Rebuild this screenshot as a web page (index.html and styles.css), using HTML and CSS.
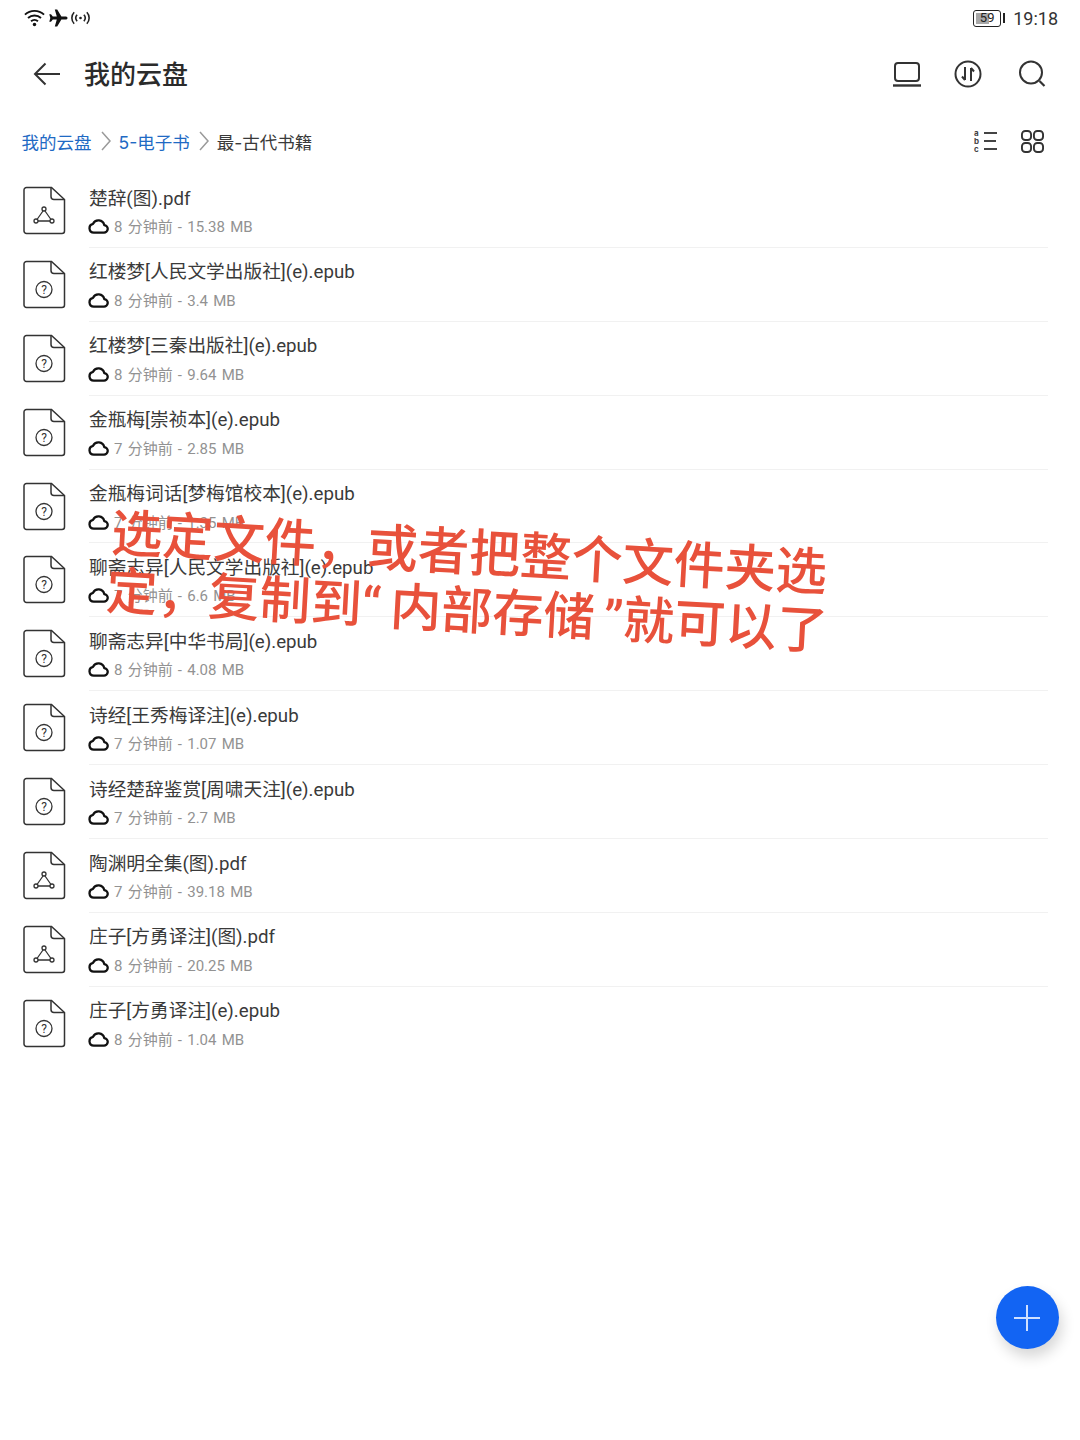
FILE: index.html
```html
<!DOCTYPE html>
<html lang="zh">
<head>
<meta charset="utf-8">
<title>我的云盘</title>
<link rel="stylesheet" href="styles.css">
</head>
<body>
<svg class="defs" width="0" height="0">
  <symbol id="file-base" viewBox="0 0 44 50">
    <path d="M3.5 1.5H28.500L41.500 13.500V45a2.500 2.500 0 0 1-2.500 2.500H3.500A2.500 2.500 0 0 1 1 45V4a2.500 2.500 0 0 1 2.500-2.500Z" fill="none" stroke="#333" stroke-width="1.500"/>
    <path d="M28 2V10.500a3 3 0 0 0 3 3H41" fill="none" stroke="#333" stroke-width="1.500"/>
  </symbol>
  <symbol id="cloud" viewBox="0 0 22 17">
    <path d="M6 15.500h10.500a4 4 0 0 0 .6-8A6.300 6.300 0 0 0 5.200 6.200 4.700 4.700 0 0 0 6 15.500Z" fill="none" stroke="#111" stroke-width="2.400" stroke-linejoin="round"/>
  </symbol>
</svg>

<header class="status">
  <div class="status-left">
    <svg class="i-wifi" viewBox="0 0 22 18"><path d="M1 5.500a14.500 14.500 0 0 1 20 0M4.200 9a10 10 0 0 1 13.600 0M7.400 12.400a5.400 5.400 0 0 1 7.200 0" fill="none" stroke="#111" stroke-width="2"/><circle cx="11" cy="15.800" r="1.800" fill="#111"/></svg>
    <svg class="i-plane" viewBox="0 0 20 18"><path d="M19.500 9c0-1-1-1.500-2-1.500h-4.100L9.200.5H6.800l2 7H4.800L3 5.200H1.300L2.300 9l-1 3.800H3l1.800-2.300h4l-2 7h2.400l4.200-7h4.100c1 0 2-.5 2-1.500Z" fill="#111"/></svg>
    <svg class="i-hot" viewBox="1 .5 18 13"><path d="M4 1.500a8 8 0 0 0 0 11M16 1.500a8 8 0 0 1 0 11M6.800 4a4.500 4.500 0 0 0 0 6M13.200 4a4.500 4.500 0 0 1 0 6" fill="none" stroke="#222" stroke-width="1.500"/><circle cx="10" cy="7" r="1.300" fill="#222"/></svg>
  </div>
  <div class="status-right">
    <div class="battery"><div class="battery-fill"></div><span class="battery-num">59</span></div>
    <div class="battery-cap"></div>
    <span class="clock">19:18</span>
  </div>
</header>

<nav class="appbar">
  <svg class="i-back" viewBox="0 0 28 24"><path d="M27 12H2M12.500 1.500 2 12l10.500 10.500" fill="none" stroke="#333" stroke-width="2"/></svg>
  <h1 class="title">我的云盘</h1>
  <div class="actions">
    <svg class="i-action" viewBox="0 0 30 26"><rect x="3" y="2" width="24" height="18" rx="3" fill="none" stroke="#333" stroke-width="2"/><path d="M1 24.500h28" stroke="#333" stroke-width="2.400"/></svg>
    <svg class="i-action mid" viewBox="0 0 28 28"><circle cx="14" cy="14" r="12.500" fill="none" stroke="#333" stroke-width="2"/><path d="M11 7v13M8 16.500l3 3.500M17 21V8M17 8l3 3.500" fill="none" stroke="#333" stroke-width="2"/></svg>
    <svg class="i-action" viewBox="0 0 28 28"><circle cx="13" cy="12.500" r="11" fill="none" stroke="#333" stroke-width="2"/><path d="m21.500 21 5 5" stroke="#333" stroke-width="2.200"/></svg>
  </div>
</nav>

<section class="crumbs">
  <a class="crumb">我的云盘</a>
  <svg class="chev" viewBox="0 0 10 20"><path d="m1 1 8 9-8 9" fill="none" stroke="#9a9a9a" stroke-width="1.500"/></svg>
  <a class="crumb">5-电子书</a>
  <svg class="chev" viewBox="0 0 10 20"><path d="m1 1 8 9-8 9" fill="none" stroke="#9a9a9a" stroke-width="1.500"/></svg>
  <span class="crumb-now">最-古代书籍</span>
  <div class="view-toggle">
    <div class="i-list">
      <div class="list-row"><span class="list-letter">a</span><span class="list-bar"></span></div>
      <div class="list-row"><span class="list-letter">b</span><span class="list-bar short"></span></div>
      <div class="list-row"><span class="list-letter">c</span><span class="list-bar"></span></div>
    </div>
    <svg class="i-grid" viewBox="0 0 24 24"><g fill="none" stroke="#333" stroke-width="2"><rect x="1" y="1" width="9.500" height="9.500" rx="3.500"/><rect x="13.500" y="1" width="9.500" height="9.500" rx="3.500"/><rect x="1" y="13.500" width="9.500" height="9.500" rx="3.500"/><rect x="13.500" y="13.500" width="9.500" height="9.500" rx="3.500"/></g></svg>
  </div>
</section>

<main class="files">
  <article class="row"><svg class="file" viewBox="0 0 44 50"><use href="#file-base"/><g fill="none" stroke="#333" stroke-width="1.300"><circle cx="21" cy="23" r="2"/><circle cx="13" cy="35" r="2"/><circle cx="29" cy="35" r="2"/><path d="M20 25 14 33.500M22 25 28 33.500M15 35h12"/></g></svg><div class="info"><div class="name">楚辞(图).pdf</div><div class="meta"><svg class="cloud"><use href="#cloud"/></svg>8 分钟前 - 15.38 MB</div></div></article>
  <article class="row"><svg class="file" viewBox="0 0 44 50"><use href="#file-base"/><circle cx="21" cy="29.500" r="8" fill="none" stroke="#333" stroke-width="1.300"/><text class="q" x="21" y="34">?</text></svg><div class="info"><div class="name">红楼梦[人民文学出版社](e).epub</div><div class="meta"><svg class="cloud"><use href="#cloud"/></svg>8 分钟前 - 3.4 MB</div></div></article>
  <article class="row"><svg class="file" viewBox="0 0 44 50"><use href="#file-base"/><circle cx="21" cy="29.500" r="8" fill="none" stroke="#333" stroke-width="1.300"/><text class="q" x="21" y="34">?</text></svg><div class="info"><div class="name">红楼梦[三秦出版社](e).epub</div><div class="meta"><svg class="cloud"><use href="#cloud"/></svg>8 分钟前 - 9.64 MB</div></div></article>
  <article class="row"><svg class="file" viewBox="0 0 44 50"><use href="#file-base"/><circle cx="21" cy="29.500" r="8" fill="none" stroke="#333" stroke-width="1.300"/><text class="q" x="21" y="34">?</text></svg><div class="info"><div class="name">金瓶梅[崇祯本](e).epub</div><div class="meta"><svg class="cloud"><use href="#cloud"/></svg>7 分钟前 - 2.85 MB</div></div></article>
  <article class="row"><svg class="file" viewBox="0 0 44 50"><use href="#file-base"/><circle cx="21" cy="29.500" r="8" fill="none" stroke="#333" stroke-width="1.300"/><text class="q" x="21" y="34">?</text></svg><div class="info"><div class="name">金瓶梅词话[梦梅馆校本](e).epub</div><div class="meta"><svg class="cloud"><use href="#cloud"/></svg>7 分钟前 - 1.35 MB</div></div></article>
  <article class="row"><svg class="file" viewBox="0 0 44 50"><use href="#file-base"/><circle cx="21" cy="29.500" r="8" fill="none" stroke="#333" stroke-width="1.300"/><text class="q" x="21" y="34">?</text></svg><div class="info"><div class="name">聊斋志异[人民文学出版社](e).epub</div><div class="meta"><svg class="cloud"><use href="#cloud"/></svg>7 分钟前 - 6.6 MB</div></div></article>
  <article class="row"><svg class="file" viewBox="0 0 44 50"><use href="#file-base"/><circle cx="21" cy="29.500" r="8" fill="none" stroke="#333" stroke-width="1.300"/><text class="q" x="21" y="34">?</text></svg><div class="info"><div class="name">聊斋志异[中华书局](e).epub</div><div class="meta"><svg class="cloud"><use href="#cloud"/></svg>8 分钟前 - 4.08 MB</div></div></article>
  <article class="row"><svg class="file" viewBox="0 0 44 50"><use href="#file-base"/><circle cx="21" cy="29.500" r="8" fill="none" stroke="#333" stroke-width="1.300"/><text class="q" x="21" y="34">?</text></svg><div class="info"><div class="name">诗经[王秀梅译注](e).epub</div><div class="meta"><svg class="cloud"><use href="#cloud"/></svg>7 分钟前 - 1.07 MB</div></div></article>
  <article class="row"><svg class="file" viewBox="0 0 44 50"><use href="#file-base"/><circle cx="21" cy="29.500" r="8" fill="none" stroke="#333" stroke-width="1.300"/><text class="q" x="21" y="34">?</text></svg><div class="info"><div class="name">诗经楚辞鉴赏[周啸天注](e).epub</div><div class="meta"><svg class="cloud"><use href="#cloud"/></svg>7 分钟前 - 2.7 MB</div></div></article>
  <article class="row"><svg class="file" viewBox="0 0 44 50"><use href="#file-base"/><g fill="none" stroke="#333" stroke-width="1.300"><circle cx="21" cy="23" r="2"/><circle cx="13" cy="35" r="2"/><circle cx="29" cy="35" r="2"/><path d="M20 25 14 33.500M22 25 28 33.500M15 35h12"/></g></svg><div class="info"><div class="name">陶渊明全集(图).pdf</div><div class="meta"><svg class="cloud"><use href="#cloud"/></svg>7 分钟前 - 39.18 MB</div></div></article>
  <article class="row"><svg class="file" viewBox="0 0 44 50"><use href="#file-base"/><g fill="none" stroke="#333" stroke-width="1.300"><circle cx="21" cy="23" r="2"/><circle cx="13" cy="35" r="2"/><circle cx="29" cy="35" r="2"/><path d="M20 25 14 33.500M22 25 28 33.500M15 35h12"/></g></svg><div class="info"><div class="name">庄子[方勇译注](图).pdf</div><div class="meta"><svg class="cloud"><use href="#cloud"/></svg>8 分钟前 - 20.25 MB</div></div></article>
  <article class="row last"><svg class="file" viewBox="0 0 44 50"><use href="#file-base"/><circle cx="21" cy="29.500" r="8" fill="none" stroke="#333" stroke-width="1.300"/><text class="q" x="21" y="34">?</text></svg><div class="info"><div class="name">庄子[方勇译注](e).epub</div><div class="meta"><svg class="cloud"><use href="#cloud"/></svg>8 分钟前 - 1.04 MB</div></div></article>
</main>

<div class="note">
  <div class="note-line">选定文件，或者把整个文件夹选</div>
  <div class="note-line second">定，复制到<span class="quote-open">“</span>内部存储<span class="quote-close">”</span>就可以了</div>
</div>

<button class="fab" aria-label="新建"><svg viewBox="0 0 28 28"><path d="M14 1v26M1 14h26" stroke="#cfe0ff" stroke-width="2"/></svg></button>
</body>
</html>
```
FILE: styles.css
```css
* { box-sizing: border-box; }
html, body { margin: 0; padding: 0; }
body {
  position: relative;
  width: 1080px;
  height: 1440px;
  overflow: hidden;
  background: #fff;
  color: #2e2e2e;
  font-family: Roboto, "Noto Sans CJK SC", sans-serif;
}
.defs { position: absolute; }

.status {
  height: 36px;
  padding: 0 22px 0 24px;
  display: flex;
  justify-content: space-between;
  align-items: center;
}
.status-left { display: flex; align-items: center; gap: 3px; }
.i-wifi { width: 21px; height: 18px; }
.i-plane { width: 20px; height: 18px; }
.i-hot { width: 19px; height: 14px; }
.status-right { display: flex; align-items: center; }
.battery {
  position: relative;
  width: 28px;
  height: 17px;
  border: 1.5px solid #222;
  border-radius: 3px;
  padding: 2px;
}
.battery-fill { width: 57%; height: 100%; background: #a8a8a8; }
.battery-num {
  position: absolute;
  inset: 0;
  text-align: center;
  font-size: 13px;
  line-height: 14px;
  color: #222;
}
.battery-cap { width: 2px; height: 10px; margin-left: 2px; background: #222; }
.clock { margin-left: 8px; font-size: 18px; color: #333; }

.appbar {
  height: 76px;
  padding: 0 33px;
  display: flex;
  align-items: center;
}
.i-back { width: 28px; height: 24px; }
.title { margin: 1px 0 0 23px; font-size: 26px; font-weight: 500; color: #2b2b2b; line-height: 1; }
.actions { margin-left: auto; display: flex; gap: 31px; align-items: center; }
.i-action { width: 30px; height: 28px; }
.i-action.mid { margin-right: 3px; }

.crumbs {
  height: 58px;
  padding: 0 36px 0 21.500px;
  display: flex;
  align-items: center;
  font-family: Inter, "Noto Sans CJK SC", sans-serif;
  font-size: 17.500px;
}
.crumb { color: #1f6ac4; }
.crumb-now { color: #3a3a3a; }
.chev { width: 10px; height: 20px; margin: 0 8px 0 9px; }
.view-toggle { margin-left: auto; display: flex; align-items: center; gap: 24px; }
.i-list { width: 23px; display: flex; flex-direction: column; gap: 1px; }
.list-row { display: flex; align-items: center; gap: 4px; height: 7px; }
.list-letter { width: 6px; font-size: 8px; font-weight: 700; line-height: 7px; color: #444; }
.list-bar { width: 14px; height: 2px; background: #444; }
.list-bar.short { width: 12px; }
.i-grid { width: 23px; height: 23px; }

.files { display: flex; flex-direction: column; padding-top: 4px; }
.row {
  height: 73.900px;
  padding-left: 23px;
  display: flex;
  align-items: flex-start;
}
.file { width: 44px; height: 50px; margin-top: 12px; flex: none; }
.q { font-size: 12px; text-anchor: middle; fill: #333; font-family: Roboto, sans-serif; }
.info {
  flex: none;
  width: 959px;
  height: 100%;
  margin-left: 22px;
  padding-top: 11.500px;
  border-bottom: 1px solid #f1f1f1;
}
.last .info { border-bottom: none; }
.name { font-size: 18.700px; line-height: 27px; color: #3a3a3a; white-space: nowrap; }
.meta {
  margin-top: 3.500px;
  display: flex;
  align-items: center;
  font-size: 15px;
  line-height: 22px;
  word-spacing: 1.500px;
  color: #929292;
  white-space: pre;
}
.cloud { width: 21px; height: 16px; margin: -2px 5px 0 -1px; flex: none; }

.note {
  position: absolute;
  left: 113px;
  top: 505px;
  transform: rotate(3.200deg);
  transform-origin: 0 0;
  font-size: 51.200px;
  font-weight: 500;
  line-height: 58px;
  color: #e8513b;
  white-space: nowrap;
}
.second { margin-left: -2px; }
.quote-open { margin-right: 9px; }
.quote-close { margin-left: 9px; }

.fab {
  position: absolute;
  left: 996px;
  top: 1286px;
  width: 63px;
  height: 63px;
  padding: 17px;
  border: none;
  border-radius: 50%;
  background: #1264f3;
  box-shadow: 3px 8px 14px rgba(0, 0, 0, 0.16);
}
.fab svg { display: block; width: 28px; height: 28px; }
```
